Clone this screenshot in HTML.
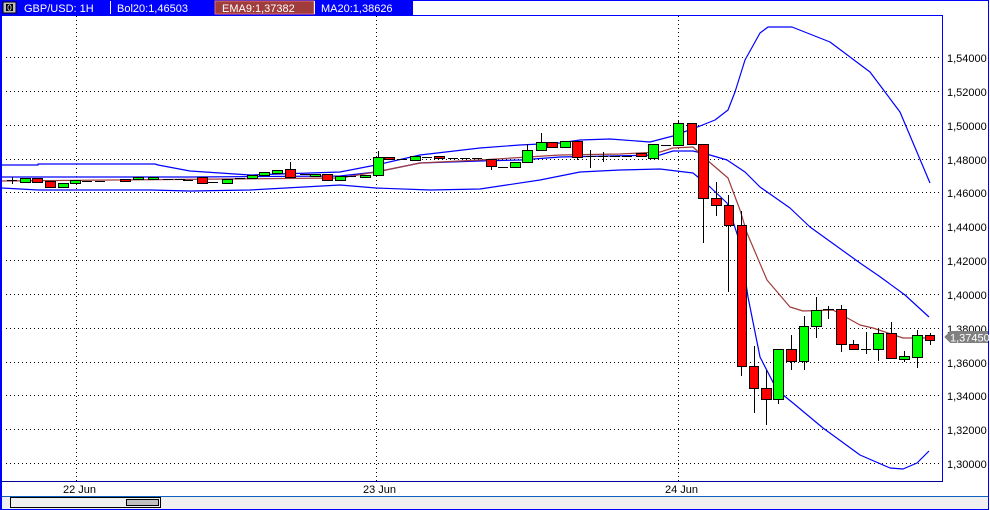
<!DOCTYPE html>
<html><head><meta charset="utf-8"><style>
html,body{margin:0;padding:0;background:#fff;}
body{width:990px;height:510px;overflow:hidden;position:relative;font-family:"Liberation Sans",sans-serif;}
svg{position:absolute;left:0;top:0;}
</style></head><body>
<svg width="990" height="510" xmlns="http://www.w3.org/2000/svg" shape-rendering="crispEdges">
<rect x="0" y="0" width="990" height="510" fill="#fff"/>
<!-- outer frame -->
<rect x="0.5" y="0.5" width="988" height="509" fill="none" stroke="#0000ff"/>
<!-- header -->
<rect x="0" y="0" width="413" height="15" fill="#0000ff"/>
<rect x="3" y="2" width="13" height="11" fill="#c0c0c0" stroke="#000" stroke-width="1"/>
<rect x="6" y="4" width="7" height="7" fill="#000"/>
<text x="9.5" y="10.5" font-size="8" fill="#fff" text-anchor="middle" font-family="Liberation Sans">0</text>
<line x1="110.5" y1="1" x2="110.5" y2="14" stroke="#fff"/>
<rect x="215" y="1" width="99" height="13" fill="#a03c3c" stroke="#e07070"/>
<line x1="314.5" y1="1" x2="314.5" y2="14" stroke="#fff"/>
<g font-size="11" fill="#fff" font-family="Liberation Sans">
<text x="24" y="12">GBP/USD: 1H</text>
<text x="117" y="12">Bol20:1,46503</text>
<text x="222" y="12">EMA9:1,37382</text>
<text x="321" y="12">MA20:1,38626</text>
</g>
<!-- chart frame -->
<line x1="0" y1="15.5" x2="943" y2="15.5" stroke="#0000ff"/>
<line x1="942.5" y1="15" x2="942.5" y2="481" stroke="#0000ff"/>
<line x1="0" y1="481.5" x2="943" y2="481.5" stroke="#0000a0"/>
<line x1="0.5" y1="0" x2="0.5" y2="510" stroke="#0000ff"/>
<line x1="1.5" y1="15" x2="1.5" y2="510" stroke="#0000ff"/>
<!-- grid -->
<g stroke="#000" stroke-dasharray="1,3" stroke-width="1">
<line x1="6" y1="57.5" x2="942" y2="57.5"/>
<line x1="6" y1="91.5" x2="942" y2="91.5"/>
<line x1="6" y1="125.5" x2="942" y2="125.5"/>
<line x1="6" y1="159.5" x2="942" y2="159.5"/>
<line x1="6" y1="192.5" x2="942" y2="192.5"/>
<line x1="6" y1="226.5" x2="942" y2="226.5"/>
<line x1="6" y1="260.5" x2="942" y2="260.5"/>
<line x1="6" y1="294.5" x2="942" y2="294.5"/>
<line x1="6" y1="328.5" x2="942" y2="328.5"/>
<line x1="6" y1="362.5" x2="942" y2="362.5"/>
<line x1="6" y1="395.5" x2="942" y2="395.5"/>
<line x1="6" y1="429.5" x2="942" y2="429.5"/>
<line x1="6" y1="463.5" x2="942" y2="463.5"/>
<line x1="76.5" y1="16" x2="76.5" y2="481"/>
<line x1="376.5" y1="16" x2="376.5" y2="481"/>
<line x1="678.5" y1="16" x2="678.5" y2="481"/>
</g>
<!-- axis labels -->
<g font-size="11" fill="#000" font-family="Liberation Sans">
<text x="947" y="62">1,54000</text>
<text x="947" y="96">1,52000</text>
<text x="947" y="130">1,50000</text>
<text x="947" y="164">1,48000</text>
<text x="947" y="197">1,46000</text>
<text x="947" y="231">1,44000</text>
<text x="947" y="265">1,42000</text>
<text x="947" y="299">1,40000</text>
<text x="947" y="333">1,38000</text>
<text x="947" y="367">1,36000</text>
<text x="947" y="400">1,34000</text>
<text x="947" y="434">1,32000</text>
<text x="947" y="468">1,30000</text>
<text x="63" y="493">22 Jun</text>
<text x="363" y="493">23 Jun</text>
<text x="665" y="493">24 Jun</text>
</g>
<!-- price tag -->
<polygon points="944,337 950,331 988,331 988,343 950,343" fill="#808080"/>
<text x="950" y="341.5" font-size="11" fill="#fff" font-family="Liberation Sans">1,37450</text>
<!-- bottom strip -->
<rect x="2" y="497" width="986" height="12" fill="#f0f0f0"/>
<line x1="2" y1="496.5" x2="988" y2="496.5" stroke="#1060c0"/>
<rect x="10.5" y="497.5" width="150" height="10" fill="#f0f0f0" stroke="#000"/>
<rect x="126.5" y="499.5" width="32" height="6" fill="#c0c0c0" stroke="#000"/>
<g shape-rendering="auto" fill="none" stroke-width="1.2" stroke-linejoin="round">
<!-- upper band -->
<polyline stroke="#0000ff" points="2,165 38,165 38,164 155,164 158,165 190,171 250,175 340,172 376,165 420,155 480,148 520,145 560,143 580,140 610,139 650,142 673,136 700,126 715,120 728,110 735,92 745,60 760,33 768,27 792,27 830,42 870,72 900,112 930,183"/>
<!-- middle band -->
<polyline stroke="#0000ff" points="2,177 190,177 340,176 376,172 420,163 480,161 520,160 560,157 610,156 660,155 673,151 693,151 710,155 727,160 745,172 760,187 790,208 810,227 860,263 879,276 905,295 929,317"/>
<!-- lower band -->
<polyline stroke="#0000ff" points="2,188 38,190 150,190 190,191 250,190 340,185 376,188 430,190 480,189 540,180 580,172 620,170 660,169 693,173 710,187 727,203 740,243 748,297 760,357 777,390 793,403 823,428 860,455 890,468 903,469 917,463 929,451"/>
<!-- EMA -->
<polyline stroke="#a03c3c" points="2,181 340,178 376,172 420,163 480,160 560,155 620,154 660,152 673,148 693,147 707,160 728,178 740,210 747,233 767,280 790,307 803,311 833,310 860,325 873,328 903,338 930,338"/>
</g>
<!-- candles -->
<g stroke="#000" stroke-width="1">
<!-- left small -->
<g fill="#00ff00">
<rect x="20.5" y="178.5" width="10" height="4"/><rect x="58.5" y="183.5" width="10" height="4"/><rect x="70.5" y="180.5" width="10" height="3"/>
<rect x="133.5" y="177.5" width="10" height="2"/><rect x="148.5" y="177.5" width="10" height="2"/><rect x="222.5" y="179.5" width="10" height="4"/>
<rect x="247.5" y="175.5" width="10" height="3"/><rect x="259.5" y="172.5" width="10" height="3"/><rect x="272.5" y="170.5" width="10" height="3"/>
<rect x="310.5" y="174.5" width="10" height="2"/><rect x="335.5" y="176.5" width="10" height="4"/>
<rect x="360.5" y="175.5" width="10" height="2"/><rect x="373.5" y="157.5" width="10" height="18"/><rect x="410.5" y="156.5" width="10" height="4"/>
<rect x="510.5" y="162.5" width="10" height="5"/><rect x="522.5" y="150.5" width="10" height="12"/><rect x="536.5" y="142.5" width="10" height="8"/>
<rect x="560.5" y="141.5" width="10" height="6"/><rect x="648.5" y="144.5" width="10" height="14"/>
<rect x="673.5" y="123.5" width="10" height="22"/><rect x="773.5" y="349.5" width="10" height="50"/><rect x="799.5" y="326.5" width="9" height="35"/>
<rect x="811.5" y="310.5" width="10" height="16"/><rect x="873.5" y="333.5" width="10" height="16"/><rect x="899.5" y="356.5" width="10" height="3"/>
<rect x="912.5" y="335.5" width="10" height="22"/>
</g>
<g fill="#ff0000">
<rect x="32.5" y="178.5" width="10" height="4"/><rect x="45.5" y="181.5" width="10" height="6"/><rect x="120.5" y="179.5" width="10" height="2"/>
<rect x="197.5" y="177.5" width="10" height="6"/><rect x="285.5" y="169.5" width="10" height="8"/><rect x="322.5" y="174.5" width="10" height="6"/>
<rect x="384.5" y="157.5" width="10" height="2"/><rect x="434.5" y="156.5" width="10" height="2"/><rect x="486.5" y="159.5" width="10" height="7"/>
<rect x="547.5" y="142.5" width="10" height="5"/><rect x="572.5" y="141.5" width="10" height="16"/><rect x="636.5" y="153.5" width="10" height="3"/>
<rect x="687.5" y="123.5" width="9" height="21"/><rect x="698.5" y="144.5" width="10" height="54"/><rect x="711.5" y="198.5" width="10" height="7"/>
<rect x="724.5" y="205.5" width="9" height="20"/><rect x="737.5" y="225.5" width="9" height="141"/><rect x="749.5" y="366.5" width="9" height="22"/>
<rect x="761.5" y="388.5" width="10" height="11"/><rect x="786.5" y="349.5" width="10" height="12"/><rect x="836.5" y="309.5" width="10" height="35"/>
<rect x="849.5" y="344.5" width="9" height="5"/><rect x="886.5" y="333.5" width="10" height="25"/><rect x="925.5" y="335.5" width="9" height="5"/>
</g>
<!-- wicks -->
<g>
<line x1="678.5" y1="121" x2="678.5" y2="123"/>
<line x1="703.5" y1="199" x2="703.5" y2="243"/>
<line x1="716.5" y1="182" x2="716.5" y2="198"/><line x1="716.5" y1="206" x2="716.5" y2="216"/>
<line x1="728.5" y1="195" x2="728.5" y2="205"/><line x1="728.5" y1="226" x2="728.5" y2="292"/>
<line x1="741.5" y1="211" x2="741.5" y2="225"/><line x1="741.5" y1="367" x2="741.5" y2="376"/>
<line x1="754.5" y1="346" x2="754.5" y2="366"/><line x1="754.5" y1="389" x2="754.5" y2="413"/>
<line x1="766.5" y1="370" x2="766.5" y2="388"/><line x1="766.5" y1="400" x2="766.5" y2="425"/>
<line x1="778.5" y1="400" x2="778.5" y2="404"/>
<line x1="791.5" y1="335" x2="791.5" y2="349"/><line x1="791.5" y1="362" x2="791.5" y2="370"/>
<line x1="804.5" y1="316" x2="804.5" y2="326"/><line x1="804.5" y1="362" x2="804.5" y2="370"/>
<line x1="816.5" y1="297" x2="816.5" y2="310"/><line x1="816.5" y1="327" x2="816.5" y2="338"/>
<line x1="823" y1="309.5" x2="834" y2="309.5"/><line x1="828.5" y1="306" x2="828.5" y2="319"/>
<line x1="841.5" y1="305" x2="841.5" y2="309"/><line x1="841.5" y1="345" x2="841.5" y2="352"/>
<line x1="853.5" y1="340" x2="853.5" y2="344"/>
<line x1="861" y1="349.5" x2="871" y2="349.5"/><line x1="866.5" y1="332" x2="866.5" y2="354"/>
<line x1="878.5" y1="328" x2="878.5" y2="333"/><line x1="878.5" y1="350" x2="878.5" y2="361"/>
<line x1="891.5" y1="322" x2="891.5" y2="333"/>
<line x1="904.5" y1="351" x2="904.5" y2="356"/><line x1="904.5" y1="360" x2="904.5" y2="362"/>
<line x1="917.5" y1="330" x2="917.5" y2="335"/><line x1="917.5" y1="358" x2="917.5" y2="368"/>
<line x1="930.5" y1="333" x2="930.5" y2="335"/><line x1="930.5" y1="341" x2="930.5" y2="345"/>
<line x1="378.5" y1="151" x2="378.5" y2="157"/>
<line x1="541.5" y1="133" x2="541.5" y2="142"/>
<line x1="527.5" y1="144" x2="527.5" y2="150"/>
<line x1="491.5" y1="167" x2="491.5" y2="170"/>
<line x1="577.5" y1="158" x2="577.5" y2="160"/>
<line x1="290.5" y1="162" x2="290.5" y2="169"/>
<line x1="590.5" y1="150" x2="590.5" y2="168"/>
<line x1="603.5" y1="152" x2="603.5" y2="162"/>
<!-- dojis -->
<line x1="7" y1="180.5" x2="17" y2="180.5"/><line x1="12.5" y1="177" x2="12.5" y2="184"/>
<line x1="82" y1="181.5" x2="92" y2="181.5"/><line x1="95" y1="181.5" x2="105" y2="181.5"/>
<line x1="163" y1="179.5" x2="173" y2="179.5"/><line x1="175" y1="179.5" x2="185" y2="179.5"/><line x1="183" y1="180.5" x2="193" y2="180.5"/>
<line x1="208" y1="182.5" x2="218" y2="182.5"/><line x1="235" y1="178.5" x2="245" y2="178.5"/><line x1="300" y1="174.5" x2="310" y2="174.5"/>
<line x1="346" y1="176.5" x2="356" y2="176.5"/><line x1="397" y1="159.5" x2="407" y2="159.5"/><line x1="422" y1="157.5" x2="432" y2="157.5"/>
<line x1="448" y1="158.5" x2="458" y2="158.5"/><line x1="460" y1="158.5" x2="470" y2="158.5"/><line x1="472" y1="158.5" x2="482" y2="158.5"/>
<line x1="498" y1="167.5" x2="508" y2="167.5"/><line x1="586" y1="156.5" x2="596" y2="156.5"/><line x1="598" y1="156.5" x2="608" y2="156.5"/>
<line x1="610" y1="156.5" x2="620" y2="156.5"/><line x1="622" y1="156.5" x2="632" y2="156.5"/><line x1="661" y1="145.5" x2="671" y2="145.5"/>
</g>
</g>
</svg>
</body></html>
